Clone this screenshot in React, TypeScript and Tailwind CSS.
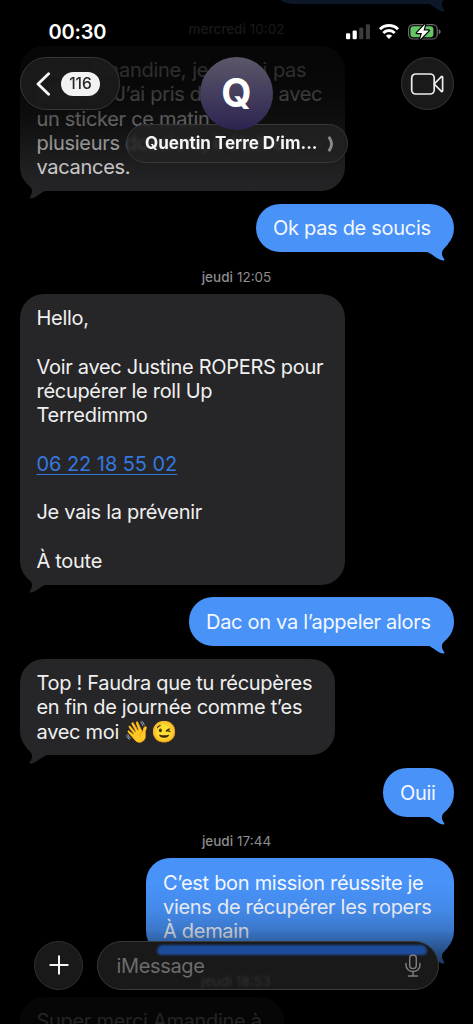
import type { ReactNode } from "react";
import clsx from "clsx";

type BubbleProps = {
  side: "in" | "out";
  className?: string;
  children: ReactNode;
};

function Tail({ side }: { side: "in" | "out" }) {
  return (
    <svg
      viewBox="0 0 26 18"
      className={clsx(
        "absolute -bottom-[8.5px] h-[18px] w-[26px]",
        side === "out" ? "right-0" : "left-0 -scale-x-100"
      )}
      fill="currentColor"
    >
      <path d="M0 9.5C6 12 10 17.3 15.6 17.6C16.8 17.6 16.6 16.6 15.8 15.6C13.6 12.4 13 8.6 16 5.8L20.5 0.5H0Z" />
    </svg>
  );
}

function Bubble({ side, className, children }: BubbleProps) {
  return (
    <div
      className={clsx(
        "relative rounded-[24px] px-[17px] pt-[12.5px] pb-[11.7px] text-[20px] leading-[24.25px] tracking-[-0.3px] whitespace-nowrap",
        side === "out"
          ? "self-end bg-[#4892f8] text-[#4892f8]"
          : "self-start bg-[#262628] text-[#262628]",
        className
      )}
    >
      <Tail side={side} />
      <div className={clsx("relative", side === "out" ? "text-[#f4f8ff]" : "text-[#f0f0f0]")}>
        {children}
      </div>
    </div>
  );
}

function Stamp({ day, time }: { day: string; time: string }) {
  return (
    <div className="-my-[12.7px] flex h-[41.7px] items-center justify-center gap-1 pt-[8px] text-[13.5px] text-[#8d8d92]">
      <span className="font-medium">{day}</span>
      <span>{time}</span>
    </div>
  );
}

function StatusBar() {
  return (
    <div className="flex h-[57px] items-start justify-between pt-[24px] pr-[32px] pl-[48.5px]">
      <span className="-mt-[4px] text-[20px] leading-[24px] font-semibold tracking-[-0.2px] text-white">00:30</span>
      <div className="flex items-start">
        <svg width="25" height="16" viewBox="0 0 25 16" fill="#fff">
          <rect x="0" y="9.2" width="4.2" height="6" rx="1.2" />
          <rect x="6.6" y="6.6" width="4.2" height="8.6" rx="1.2" />
          <rect x="13.2" y="3.4" width="4.2" height="11.8" rx="1.2" fill="#3c3c3c" />
          <rect x="19.8" y="0.2" width="4.2" height="15" rx="1.2" fill="#3c3c3c" />
        </svg>
        <svg className="ml-[8px]" width="20" height="15" viewBox="0 0 20 15" fill="none" stroke="#fff" strokeWidth="2.9">
          <path d="M1 5.2a12.7 12.7 0 0 1 18 0" />
          <path d="M4.3 8.9a8 8 0 0 1 11.4 0" />
          <path d="M10 15l-3.1-3.2a4.4 4.4 0 0 1 6.2 0Z" fill="#fff" stroke="none" />
        </svg>
        <svg className="ml-[9.5px]" width="33" height="16" viewBox="0 0 33 16">
          <rect x="0.6" y="0.6" width="28.6" height="14.4" rx="4.6" fill="none" stroke="#6b6b6b" strokeWidth="1.2" />
          <path d="M30.7 5.3c1.2.4 2 1.4 2 2.5s-.8 2.1-2 2.5z" fill="#6b6b6b" />
          <rect x="2.4" y="2.3" width="23" height="11" rx="3" fill="#65c466" />
          <path d="M17.3 0L8.8 9h5.2L12 15.6L20.8 6.5h-5.3z" fill="#fff" stroke="#000" strokeWidth="2.4" paintOrder="stroke" strokeLinejoin="round" />
        </svg>
      </div>
    </div>
  );
}

const glass = "border border-[#383838] backdrop-blur-[1.5px]";

function Header() {
  return (
    <header className="absolute inset-x-0 top-0">
      <StatusBar />
      <div className="flex items-start px-[19.5px]">
        <div className={clsx("flex h-[53px] w-[100.5px] items-center rounded-full bg-[#1b1b1b]/92 pl-[15px]", glass)}>
          <svg width="15" height="24" viewBox="0 0 15 24" fill="none" stroke="#f5f5f5" strokeWidth="2.8" strokeLinecap="round" strokeLinejoin="round">
            <path d="M12.6 1.8L2 12l10.6 10.2" />
          </svg>
          <span className="ml-[10.5px] flex h-[24px] w-[39px] items-center justify-center rounded-full bg-[#f2f2f2] text-[15.5px] font-medium text-[#262626]">
            116
          </span>
        </div>

        <div className="ml-[5.5px] flex w-[222px] flex-col items-center">
          <div className="z-10 flex size-[73px] items-center justify-center rounded-full bg-linear-to-b from-[#5d576a] to-[#2d2450] text-[39px] font-bold text-white">
            Q
          </div>
          <div className={clsx("-mt-[6px] flex h-[39px] w-[222px] items-center rounded-full bg-[#222223]/82 pl-[18.5px]", glass)}>
            <span className="w-[173px] text-[17px] font-bold whitespace-nowrap text-[#f5f5f5]">
              Quentin Terre D’im...
            </span>
            <svg className="ml-[9px]" width="8" height="16" viewBox="0 0 8 16" fill="none" stroke="#8a8a8a" strokeWidth="2.8">
              <path d="M1.8 0.8C3.2 3 4.6 5.5 4.6 8s-1.4 5-2.8 7.2" />
            </svg>
          </div>
        </div>

        <div className={clsx("ml-auto flex size-[53px] items-center justify-center rounded-full bg-[#1b1b1b]/92", glass)}>
          <svg width="34" height="24" viewBox="0 0 34 24" fill="none" stroke="#ededed" strokeWidth="1.7" strokeLinejoin="round">
            <rect x="1.7" y="2" width="22.5" height="20" rx="4" />
            <path d="M24.2 12l7.2-7.3c.5-.5 1.2-.3 1.2.5v13.6c0 .8-.7 1-1.2.5Z" />
          </svg>
        </div>
      </div>
    </header>
  );
}

function Composer() {
  return (
    <footer className="absolute inset-x-0 bottom-[34.5px] flex justify-between px-[34px]">
      <div className="flex size-[49px] items-center justify-center rounded-full border border-[#303030] bg-[#191919]">
        <svg width="20" height="20" viewBox="0 0 20 20" stroke="#f5f5f5" strokeWidth="2" strokeLinecap="round">
          <path d="M10 1.3v17.4M1.3 10h17.4" />
        </svg>
      </div>
      <div className="relative flex h-[49px] w-[342px] items-center justify-between overflow-hidden rounded-full border border-[#383a3e] bg-[#191919] pr-[17px] pl-[18.5px]">
        {/* refraction of the bubble and date behind the glass */}
        <div className="absolute top-[3px] left-[59px] h-[10.5px] w-[270px] rounded-t-[7px] rounded-b-[5px] bg-[#1d4c9a] blur-[0.8px]" />
        <div className="absolute top-[29px] left-[103px] text-[13.5px] font-medium text-[#303030] blur-[1px]">
          jeudi 18:53
        </div>
        <span className="relative pt-[2px] text-[20px] tracking-[-0.35px] text-[#6c6c6c]">iMessage</span>
        <svg className="relative" width="16" height="23" viewBox="0 0 16 23" fill="none" stroke="#7c7c7c" strokeWidth="1.5" strokeLinecap="round">
          <rect x="4.7" y="1" width="6.6" height="13.5" rx="3.3" />
          <path d="M1 9.5v1.8a7 6.3 0 0 0 14 0V9.5M8 17.8v4M3.5 21.9h9" />
        </svg>
      </div>
    </footer>
  );
}

export default function App() {
  return (
    <div className="relative h-[1024px] w-[473px] overflow-hidden bg-black font-[Inter,'Noto_Color_Emoji',sans-serif]">
      <main className="-mt-[44.7px] flex flex-col gap-[12.7px] px-[19.5px]">
        <Bubble side="out" className="h-[48.5px] w-[184px]">{" "}</Bubble>
        <Stamp day="mercredi" time="10:02" />
        <Bubble side="in" className="w-[325.5px]">
          <p className="[word-spacing:0.7px]">Salut Amandine, je ne l’ai pas</p>
          <p>
            <span className="inline-block w-[78px]">affiché.</span>J’ai pris des infos avec
          </p>
          <p>un sticker ce matin</p>
          <p>plusieurs dossiers, il était en</p>
          <p>vacances.</p>
        </Bubble>
        <Bubble side="out" className="w-[197.5px]">Ok pas de soucis</Bubble>
        <Stamp day="jeudi" time="12:05" />
        <Bubble side="in" className="w-[325.5px]">
          <p>Hello,</p>
          <br />
          <p>Voir avec Justine ROPERS pour</p>
          <p>récupérer le roll Up</p>
          <p>Terredimmo</p>
          <br />
          <p className="tracking-[-0.06px] text-[#3478e0] underline decoration-[1.3px] underline-offset-[3px]">06 22 18 55 02</p>
          <br />
          <p>Je vais la prévenir</p>
          <br />
          <p>À toute</p>
        </Bubble>
        <Bubble side="out" className="w-[264.5px]">Dac on va l’appeler alors</Bubble>
        <Bubble side="in" className="w-[315px]">
          <p>Top ! Faudra que tu récupères</p>
          <p>en fin de journée comme t’es</p>
          <p>
            avec moi <span className="text-[21px] leading-none tracking-[1px]">👋😉</span>
          </p>
        </Bubble>
        <Bubble side="out" className="w-[70.5px]">Ouii</Bubble>
        <Stamp day="jeudi" time="17:44" />
        <Bubble side="out" className="w-[307.5px]">
          <p>C’est bon mission réussite je</p>
          <p>viens de récupérer les ropers</p>
          <p>À demain</p>
        </Bubble>
        {/* the next date is drawn by the composer glass */}
        <div className="-my-[12.7px] h-[41.7px]" />
        <Bubble side="in" className="w-[264.5px]">Super merci Amandine à</Bubble>
      </main>

      <div className="absolute inset-x-0 top-0 h-[210px] bg-[linear-gradient(to_bottom,rgb(0_0_0/0.84)_0px,rgb(0_0_0/0.82)_70px,rgb(0_0_0/0.76)_95px,rgb(0_0_0/0.62)_120px,rgb(0_0_0/0.4)_143px,rgb(0_0_0/0.18)_168px,rgb(0_0_0/0.05)_190px,transparent_210px)]" />
      <div className="absolute inset-x-0 bottom-0 h-[140px] bg-[linear-gradient(to_bottom,transparent_0px,rgb(0_0_0/0.06)_25px,rgb(0_0_0/0.18)_45px,rgb(0_0_0/0.32)_56px,rgb(0_0_0/0.56)_76px,rgb(0_0_0/0.84)_100px,rgb(0_0_0/0.86)_140px)]" />

      <Header />
      <Composer />
    </div>
  );
}
